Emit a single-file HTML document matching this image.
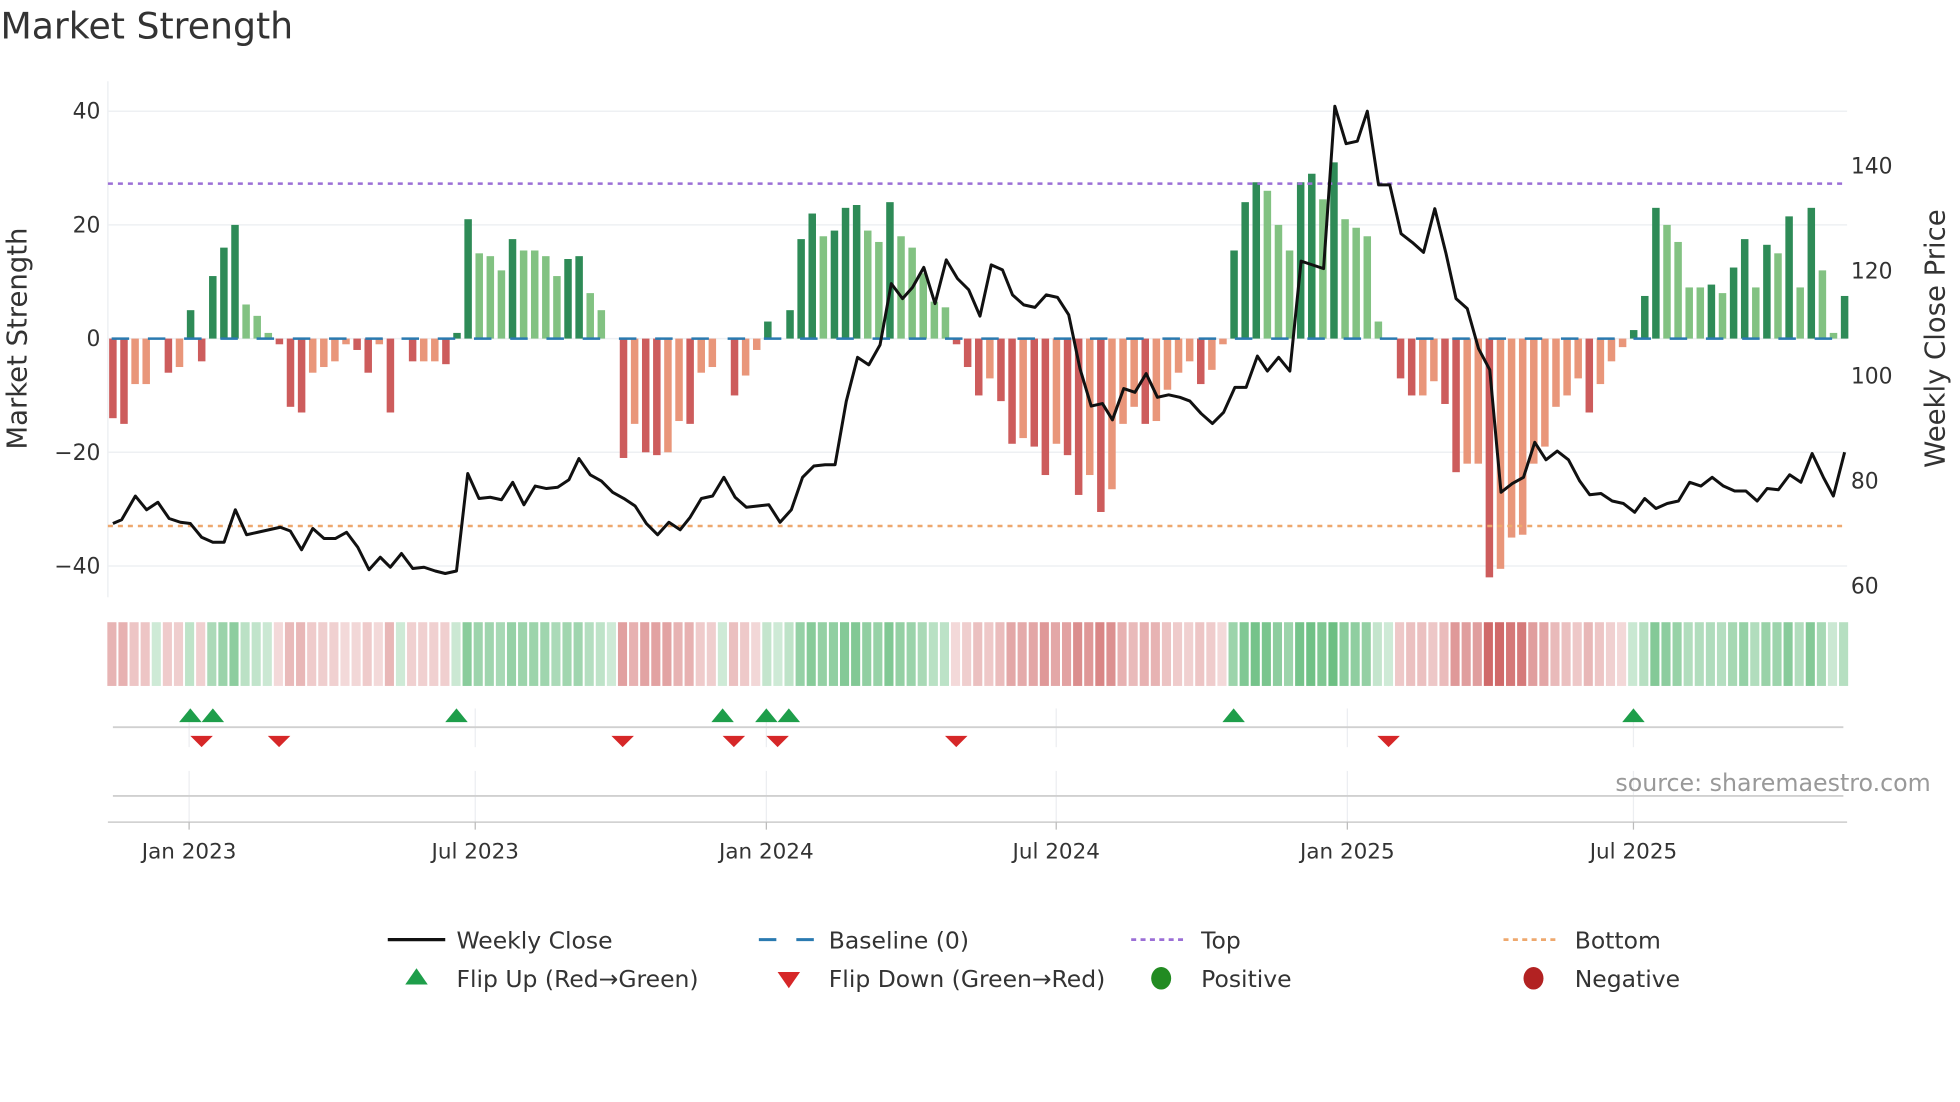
<!DOCTYPE html>
<html><head><meta charset="utf-8"><style>
html,body{margin:0;padding:0;background:#fff;width:1960px;height:1102px;overflow:hidden}
svg{display:block}
text{font-family:"DejaVu Sans","Liberation Sans",sans-serif;fill:#333}
</style></head><body>
<svg id="s" width="1960" height="1102" viewBox="0 0 1568 882" xmlns="http://www.w3.org/2000/svg">
<text x="0" y="31" font-size="29">Market Strength</text>
<g stroke="#eef0f3" stroke-width="1.2">
<line x1="86" y1="89" x2="1478" y2="89"/><line x1="86" y1="180" x2="1478" y2="180"/><line x1="86" y1="271" x2="1478" y2="271"/><line x1="86" y1="362" x2="1478" y2="362"/><line x1="86" y1="453" x2="1478" y2="453"/>
<line x1="86" y1="65" x2="86" y2="478"/>
</g>
<g font-size="17.5" text-anchor="end">
<text x="80" y="95">40</text><text x="80" y="186">20</text><text x="80" y="277">0</text><text x="80" y="368">−20</text><text x="80" y="459">−40</text>
</g>
<g font-size="17.5">
<text x="1481" y="139">140</text><text x="1481" y="223">120</text><text x="1481" y="307">100</text><text x="1481" y="391">80</text><text x="1481" y="475">60</text>
</g>
<text transform="translate(21,271) rotate(-90)" font-size="22" text-anchor="middle">Market Strength</text>
<text transform="translate(1556,271) rotate(-90)" font-size="22" text-anchor="middle">Weekly Close Price</text>
<g id="bars"></g>
<line x1="86" y1="271" x2="1478" y2="271" stroke="#2a7ab0" stroke-width="2" stroke-dasharray="14,15" stroke-dashoffset="-3"/>
<line x1="86" y1="147" x2="1478" y2="147" stroke="#9b6fd6" stroke-width="2" stroke-dasharray="4,4"/>
<line x1="86" y1="421" x2="1478" y2="421" stroke="#eea86e" stroke-width="2" stroke-dasharray="4,4"/>
<polyline id="pl" fill="none" stroke="#111" stroke-width="2.4" stroke-linejoin="round"/>
<g id="strip"></g>
<g stroke="#eceef1" stroke-width="1">
<line x1="151" y1="567" x2="151" y2="598"/><line x1="380" y1="567" x2="380" y2="598"/><line x1="613" y1="567" x2="613" y2="598"/><line x1="845" y1="567" x2="845" y2="598"/><line x1="1078" y1="567" x2="1078" y2="598"/><line x1="1307" y1="567" x2="1307" y2="598"/>
<line x1="151" y1="617" x2="151" y2="658"/><line x1="380" y1="617" x2="380" y2="658"/><line x1="613" y1="617" x2="613" y2="658"/><line x1="845" y1="617" x2="845" y2="658"/><line x1="1078" y1="617" x2="1078" y2="658"/><line x1="1307" y1="617" x2="1307" y2="658"/>
</g>
<line x1="90" y1="582" x2="1475" y2="582" stroke="#d0d0d0" stroke-width="1.5"/>
<line x1="90" y1="637" x2="1475" y2="637" stroke="#d0d0d0" stroke-width="1.5"/>
<line x1="86" y1="658" x2="1478" y2="658" stroke="#ccc" stroke-width="1.2"/>
<g stroke="#bbb"><line x1="151" y1="658" x2="151" y2="664"/><line x1="380" y1="658" x2="380" y2="664"/><line x1="613" y1="658" x2="613" y2="664"/><line x1="845" y1="658" x2="845" y2="664"/><line x1="1078" y1="658" x2="1078" y2="664"/><line x1="1307" y1="658" x2="1307" y2="664"/></g>
<g id="flips"></g>
<text x="1545" y="633" font-size="19" text-anchor="end" style="fill:#999">source: sharemaestro.com</text>
<g font-size="17.2" text-anchor="middle">
<text x="151" y="687">Jan 2023</text><text x="380" y="687">Jul 2023</text><text x="613" y="687">Jan 2024</text><text x="845" y="687">Jul 2024</text><text x="1078" y="687">Jan 2025</text><text x="1307" y="687">Jul 2025</text>
</g>
<g font-size="18.8">
<line x1="310" y1="752" x2="356" y2="752" stroke="#111" stroke-width="2.6"/><text x="365" y="759">Weekly Close</text>
<line x1="607" y1="752" x2="651" y2="752" stroke="#2a7ab0" stroke-width="2.4" stroke-dasharray="14,16"/><text x="663" y="759">Baseline (0)</text>
<line x1="905" y1="752" x2="949" y2="752" stroke="#9b6fd6" stroke-width="2.2" stroke-dasharray="4,3.5"/><text x="961" y="759">Top</text>
<line x1="1203" y1="752" x2="1247" y2="752" stroke="#eea86e" stroke-width="2.2" stroke-dasharray="4,3.5"/><text x="1260" y="759">Bottom</text>
<polygon points="324,788 342,788 333,775" fill="#1e9e4a"/><text x="365" y="790">Flip Up (Red→Green)</text>
<polygon points="622,778 640,778 631,791" fill="#d62728"/><text x="663" y="790">Flip Down (Green→Red)</text>
<ellipse cx="929" cy="783" rx="8" ry="9" fill="#228b22"/><text x="961" y="790">Positive</text>
<ellipse cx="1227" cy="783" rx="8" ry="9" fill="#b22222"/><text x="1260" y="790">Negative</text>
</g>
</svg>
<script>
var v=[-14,-15,-8,-8,0,-6,-5,5,-4,11,16,20,6,4,1,-1,-12,-13,-6,-5,-4,-1,-2,-6,-1,-13,0,-4,-4,-4,-4.5,1,21,15,14.5,12,17.5,15.5,15.5,14.5,11,14,14.5,8,5,0,-21,-15,-20,-20.5,-20,-14.5,-15,-6,-5,0,-10,-6.5,-2,3,0,5,17.5,22,18,19,23,23.5,19,17,24,18,16,11.5,6.5,5.5,-1,-5,-10,-7,-11,-18.5,-17.5,-19,-24,-18.5,-20.5,-27.5,-24,-30.5,-26.5,-15,-12,-15,-14.5,-9,-6,-4,-8,-5.5,-1,15.5,24,27.5,26,20,15.5,27.5,29,24.5,31,21,19.5,18,3,0,-7,-10,-10,-7.5,-11.5,-23.5,-22,-22,-42,-40.5,-35,-34.5,-22,-19,-12,-10,-7,-13,-8,-4,-1.5,1.5,7.5,23,20,17,9,9,9.5,8,12.5,17.5,9,16.5,15,21.5,9,23,12,1,7.5];
var NS="http://www.w3.org/2000/svg",b=document.getElementById('bars'),st=document.getElementById('strip');
function el(t,a,p){var e=document.createElementNS(NS,t);for(var k in a)e.setAttribute(k,a[k]);p.appendChild(e);return e;}
var dx=(1476-90)/(v.length-1);
for(var i=0;i<v.length;i++){var x=90+i*dx,val=v[i],p=i?v[i-1]:0;
 var up=Math.abs(val)>Math.abs(p)||(val>0&&p<=0)||(val<0&&p>=0);
 var c=val>=0?(up?'#2e8b57':'#82c282'):(up?'#cd5c5c':'#e9967a');
 if(val!=0){var h=Math.abs(val)*4.55;el('rect',{x:x-3,y:val>0?271-h:271,width:6,height:h,fill:c},b);}
 var sc=val>=0?'rgba(60,170,90,'+(0.25+Math.min(1,Math.abs(val)/30)*0.5)+')':'rgba(200,80,80,'+(0.2+Math.min(1,Math.abs(val)/40)*0.65)+')';
 el('rect',{x:x-4.45,y:498,width:dx-1.6,height:51,fill:sc},st);}
var pts="90,419 97,416 108,397 117,408 126,402 135,415 144,418 152,419 161,430 170,434 179,434 188,408 197,428 206,426 215,424 224,422 232,425 241,440 250,423 259,431 268,431 277,426 286,438 295,456 304,446 312,454 321,443 330,455 339,454 348,457 356,459 365,457 374,379 383,399 392,398 401,400 410,386 419,404 428,389 437,391 446,390 455,384 463,367 472,380 481,385 490,394 499,399 508,405 517,419 526,428 535,418 544,424 552,414 561,399 570,397 579,382 588,398 597,406 606,405 615,404 624,418 633,408 642,382 651,373 660,372 668,372 677,321 686,286 695,292 704,276 713,227 722,239 730,230 739,214 748,243 757,208 766,223 775,232 784,253 793,212 802,216 810,236 819,244 828,246 837,236 846,238 855,252 864,295 873,325 882,323 890,336 899,311 908,314 917,299 926,318 935,316 944,318 952,321 961,331 970,339 979,330 988,310 997,310 1006,285 1014,297 1023,286 1032,297 1041,209 1050,212 1059,215 1068,85 1077,115 1086,113 1094,89 1103,148 1112,148 1121,187 1130,194 1139,202 1148,167 1157,203 1165,239 1174,247 1183,279 1192,296 1201,394 1210,387 1219,382 1228,354 1237,368 1246,361 1255,368 1264,385 1272,396 1281,395 1290,401 1299,403 1308,410 1316,399 1325,407 1334,403 1343,401 1352,386 1361,389 1370,382 1379,389 1388,393 1397,393 1406,401 1414,391 1423,392 1432,380 1441,386 1450,363 1459,382 1467,397 1476,362";
document.getElementById('pl').setAttribute('points',pts);
var f=document.getElementById('flips');
[152,170,365,578,613,631,987,1307].forEach(function(x){el('polygon',{points:(x-9)+',578 '+(x+9)+',578 '+x+',567',fill:'#1e9e4a'},f);});
[161,223,498,587,622,765,1111].forEach(function(x){el('polygon',{points:(x-9)+',589 '+(x+9)+',589 '+x+',598',fill:'#d62728'},f);});
</script>
</body></html>
